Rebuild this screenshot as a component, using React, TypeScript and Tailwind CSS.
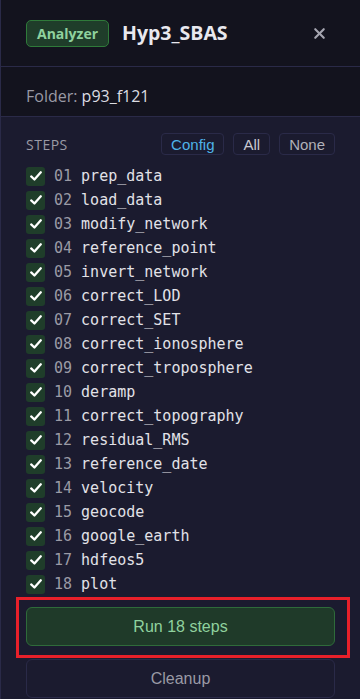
import { X } from 'lucide-react';

const STEPS = [
  'prep_data',
  'load_data',
  'modify_network',
  'reference_point',
  'invert_network',
  'correct_LOD',
  'correct_SET',
  'correct_ionosphere',
  'correct_troposphere',
  'deramp',
  'correct_topography',
  'residual_RMS',
  'reference_date',
  'velocity',
  'geocode',
  'google_earth',
  'hdfeos5',
  'plot',
];

function CheckBox() {
  return (
    <span className="flex h-[19px] w-[19px] shrink-0 items-center justify-center rounded-[3px] bg-[#1f3d2a]">
      <svg viewBox="0 0 16 16" className="h-[14px] w-[14px]" fill="none">
        <path d="M2.5 8.5 L6.2 12 L13.5 3.8" stroke="#ffffff" strokeWidth="2.6" strokeLinecap="round" strokeLinejoin="round" />
      </svg>
    </span>
  );
}

export default function App() {
  return (
    <div className="h-[699px] w-[360px] overflow-hidden border-l border-[#2a2a48] bg-[#1b1b2f] font-['Open_Sans','Liberation_Sans',sans-serif]">
      {/* Header */}
      <div className="flex h-[67px] items-center border-b border-[#2a2a48] bg-[#13131e] pl-[25px] pr-[32px]">
        <span className="flex h-[27px] items-center rounded-[5px] border border-[#2f7a3a] bg-[#1f3d2a] px-[10px] text-[14px] font-bold text-[#8fd19e]">
          Analyzer
        </span>
        <span className="ml-[13px] text-[19.5px] font-bold text-[#e8e8ee]">Hyp3_SBAS</span>
        <X className="ml-auto h-[17px] w-[17px] text-[#a5a5b0]" strokeWidth={3} />
      </div>

      {/* Folder */}
      <div className="border-b border-[#2a2a48] bg-[#13131e] pl-[25px] pt-[19px] pb-[10px] text-[16px] leading-[20px]">
        <span className="text-[#9a9aa5]">Folder: </span>
        <span className="text-[#dcdce2]">p93_f121</span>
      </div>

      {/* Steps */}
      <div className="px-[25px] pt-[16px]">
        <div className="flex items-center">
          <span className="text-[14px] tracking-[0.5px] text-[#9a9aa5]">STEPS</span>
          <div className="ml-auto flex gap-[9px] font-['Liberation_Sans',sans-serif]">
            <button className="h-[22px] rounded-[4px] border border-[#2a2a48] px-[9px] text-[15px] leading-none text-[#4fb3e8]">Config</button>
            <button className="h-[22px] rounded-[4px] border border-[#2a2a48] px-[9px] text-[15px] leading-none text-[#c8c8d0]">All</button>
            <button className="h-[22px] rounded-[4px] border border-[#2a2a48] px-[9px] text-[15px] leading-none text-[#b0b0b8]">None</button>
          </div>
        </div>

        <div className="mt-[9px] flex flex-col">
          {STEPS.map((s, i) => (
            <div key={s} className="flex h-[24px] items-center gap-[9px] font-['DejaVu_Sans_Mono',monospace] text-[15px]">
              <CheckBox />
              <span>
                <span className="text-[#9a9aa5]">{String(i + 1).padStart(2, '0')}</span>
                <span className="text-[#e2e2e8]"> {s}</span>
              </span>
            </div>
          ))}
        </div>

        <div className="relative mt-[11px]">
          <button className="flex h-[39px] w-full items-center justify-center rounded-[6px] border border-[#2f6b3a] bg-[#1f3a29] font-['Liberation_Sans',sans-serif] text-[16px] text-[#8fd19e]">
            Run 18 steps
          </button>
          <div className="pointer-events-none absolute -left-[10px] -right-[15px] -top-[10px] -bottom-[12px] border-[3px] border-[#e8202a]" />
        </div>

        <button className="mt-[13px] flex h-[39px] w-full items-center justify-center rounded-[6px] border border-[#2a2a48] font-['Liberation_Sans',sans-serif] text-[16px] text-[#9a9aa5]">
          Cleanup
        </button>
      </div>
    </div>
  );
}
